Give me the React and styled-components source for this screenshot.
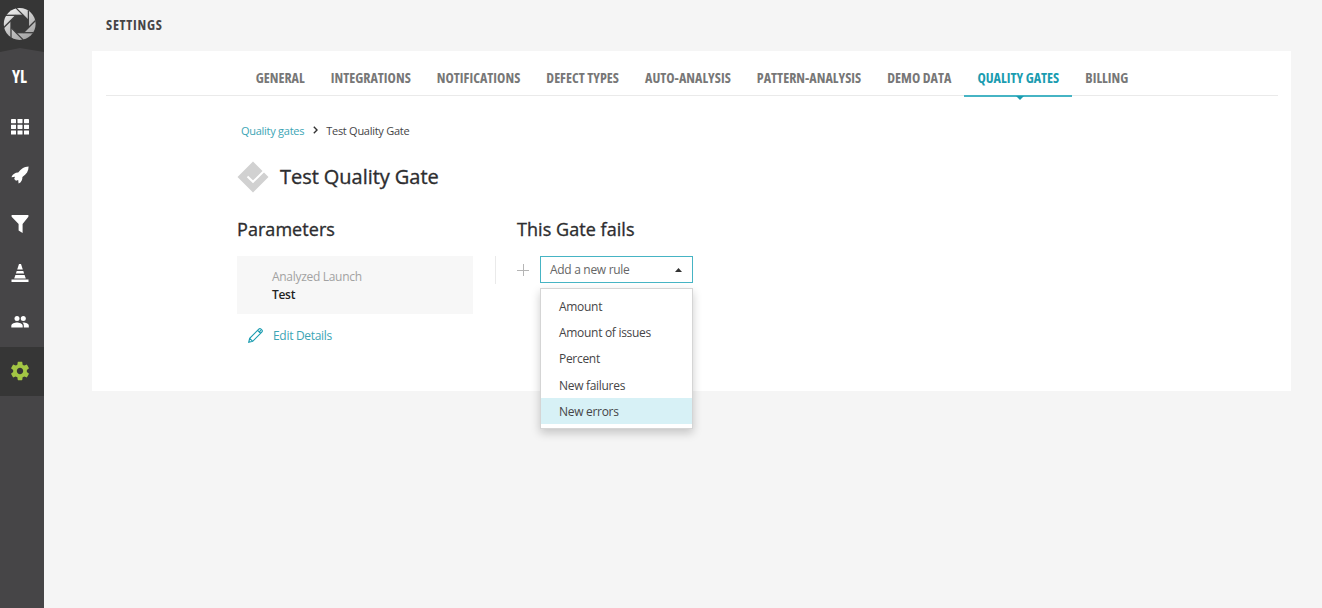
import React from 'react';
import styled, { createGlobalStyle, css } from 'styled-components';

const GlobalStyle = createGlobalStyle`
  * { box-sizing: border-box; }
  body {
    margin: 0;
    background: #f5f5f5;
    font-family: 'Open Sans', 'Noto Sans', sans-serif;
    letter-spacing: -0.3px;
    color: #464547;
    overflow: hidden;
  }
`;

const condensed = css`
  font-family: 'Open Sans', 'Noto Sans', sans-serif;
  font-stretch: 75%;
  font-weight: 700;
  letter-spacing: 0;
`;

const mediumWeight = css`
  font-weight: 500;
  letter-spacing: 0;
  color: #2d2d2f;
  -webkit-text-stroke: 0.35px #2d2d2f;
`;

const Layout = styled.div`
  display: flex;
  width: 1322px;
  height: 608px;
`;

const Sidebar = styled.nav`
  display: flex;
  flex-direction: column;
  width: 44px;
  height: 608px;
  background: #464547;
`;

const LogoBox = styled.div`
  height: 53px;
  svg { display: block; }
`;

const ProjectName = styled.div`
  ${condensed}
  height: 49px;
  padding-right: 5px;
  line-height: 48px;
  font-size: 17px;
  text-align: center;
  color: #fff;
`;

const NavItem = styled.div`
  display: flex;
  align-items: center;
  justify-content: center;
  height: 49px;
  padding: 0 4px ${(p) => (p.$low ? 0 : 2)}px 0;
  color: ${(p) => (p.$active ? '#a3c644' : '#fff')};
  background: ${(p) => (p.$active ? '#363636' : 'transparent')};
`;

const Main = styled.main`
  display: flex;
  flex-direction: column;
  flex: 1;
  padding: 0 31px 0 48px;
`;

const PageTitle = styled.h1`
  ${condensed}
  margin: 0;
  padding-left: 14px;
  height: 51px;
  line-height: 49px;
  font-size: 14px;
  letter-spacing: 0.75px;
`;

const Card = styled.section`
  height: 340px;
  padding: 0 13px 0 14px;
  background: #fff;
`;

const Tabs = styled.div`
  display: flex;
  justify-content: center;
  height: 45px;
  border-bottom: 1px solid #eaeaea;
`;

const Tab = styled.div`
  ${condensed}
  position: relative;
  height: 46px;
  padding: 0 13px;
  line-height: 53px;
  font-size: 14px;
  letter-spacing: 0.02px;
  white-space: nowrap;
  color: ${(p) => (p.$active ? '#1a9cb0' : '#777')};
  ${(p) => p.$active && css`
    border-bottom: 2px solid #46b4c4;
    &::after {
      content: '';
      position: absolute;
      left: 50%;
      bottom: -5px;
      margin-left: -2px;
      border: 4px solid transparent;
      border-bottom-width: 0;
      border-top-color: #1a9cb0;
    }
  `}
`;

const Content = styled.div`
  padding-left: 131px;
`;

const Breadcrumbs = styled.div`
  display: flex;
  align-items: center;
  height: 20px;
  margin-top: 24px;
  padding-left: 4px;
  font-size: 11px;
  letter-spacing: -0.27px;
  svg { margin: 0 8px 0 9px; }
`;

const Link = styled.span`
  color: #3ca5b5;
`;

const GateHeader = styled.div`
  display: flex;
  align-items: center;
  height: 34px;
  margin-top: 20px;
`;

const GateName = styled.h2`
  ${mediumWeight}
  margin: 0 0 0 11px;
  font-size: 20px;
  letter-spacing: -0.05px;
  line-height: 36px;
`;

const Columns = styled.div`
  display: flex;
  margin-top: 22px;
`;

const Parameters = styled.div`
  width: 236px;
`;

const Rules = styled.div`
  margin-left: 22px;
`;

const Heading = styled.h3`
  ${mediumWeight}
  margin: 0;
  height: 40px;
  padding-left: ${(p) => p.$indent || 0}px;
  font-size: 18px;
  letter-spacing: 0.05px;
  line-height: 26px;
`;

const ParamBox = styled.div`
  height: 58px;
  padding: 12px 0 0 35px;
  background: #f7f7f7;
  font-size: 12px;
  line-height: 18px;
`;

const ParamLabel = styled.div`
  color: #a2a2a2;
`;

const ParamValue = styled.div`
  font-size: 12px;
  font-weight: 600;
  line-height: 17px;
  color: #222;
`;

const EditLink = styled.div`
  display: flex;
  align-items: center;
  gap: 10px;
  height: 20px;
  margin-top: 11px;
  padding-left: 11px;
  font-size: 12px;
  color: #3ca5b5;
`;

const RuleRow = styled.div`
  display: flex;
  height: 28px;
  border-left: 1px solid #eaeaea;
  padding-left: 21px;
`;

const PlusBox = styled.div`
  width: 23px;
  padding-top: 8px;
  svg { display: block; }
`;

const Select = styled.div`
  position: relative;
  display: flex;
  align-items: center;
  justify-content: space-between;
  width: 153px;
  height: 27px;
  padding: 0 10px 0 9px;
  border: 1px solid #46b4c4;
  font-size: 12px;
  color: #666;
`;

const Menu = styled.div`
  position: absolute;
  left: -1px;
  top: 31px;
  width: 153px;
  height: 141px;
  padding-top: 4px;
  border: 1px solid #d5d5d5;
  background: #fff;
  box-shadow: 0 4px 9px rgba(0, 0, 0, 0.2);
`;

const Option = styled.div`
  height: 26.2px;
  padding-left: 18px;
  line-height: 27.4px;
  color: #464547;
  background: ${(p) => (p.$hover ? '#d7f1f6' : 'transparent')};
`;

const Logo = () => (
  <svg width="44" height="53" viewBox="0 0 44 53">
    <path d="M0 0h44v52L20 48 0 52z" fill="#363636" />
    <defs>
      <linearGradient id="blade" x1="0" y1="0" x2="0.6" y2="1">
        <stop offset="0" stopColor="#f4f4f4" />
        <stop offset="1" stopColor="#a6a6a6" />
      </linearGradient>
    </defs>
    <circle cx="19.7" cy="24" r="15.900" fill="url(#blade)" />
    <path
      d="M16.100 15.300h7.200l5.100 5.100v7.200l-5.100 5.100h-7.200l-5.100-5.100v-7.200z"
      fill="#3a3a3a"
    />
    <g stroke="#3c3c3c" strokeWidth="1.300">
      {[0, 45, 90, 135, 180, 225, 270, 315].map((a) => (
        <path key={a} d="M23.300 15.300H6" transform={`rotate(${a} 19.7 24)`} />
      ))}
    </g>
  </svg>
);

const GridIcon = () => (
  <svg width="18" height="16" viewBox="0 0 18 16" fill="currentColor">
    {[0, 5.7, 11.4].map((y) =>
      [0, 6.5, 13].map((x) => <rect key={`${x}-${y}`} x={x} y={y} width="5" height="4.2" rx="0.4" />)
    )}
  </svg>
);

const RocketIcon = () => (
  <svg width="18" height="18" viewBox="0 0 18 18" fill="currentColor">
    <path d="M17.6.4C13.200.5 9.600 3 7.200 6.600 4.500 6.500 1.800 8 .4 11.300L4 10.800 3.200 13 5 14.800 7.200 14 7.600 17.600C10.500 16 11.500 13.800 11.400 10.900 15.500 8.200 17.700 4.800 17.600.4z" />
  </svg>
);

const FilterIcon = () => (
  <svg width="18" height="18" viewBox="0 0 18 18" fill="currentColor">
    <path d="M.6 0h16.800v1.800L11.600 9v9l-4-2.400V9L.6 1.800z" />
  </svg>
);

const ConeIcon = () => (
  <svg width="18" height="18" viewBox="0 0 18 18" fill="currentColor">
    <path d="M8 0h2l1.800 5.500H6.200zM5.700 7h6.600l.8 2.500H4.900zM4.400 11h9.200l1.200 3.500H3.200zM.5 15.500h17V18H.5z" />
  </svg>
);

const MembersIcon = () => (
  <svg width="18" height="18" viewBox="0 0 18 18" fill="currentColor">
    <circle cx="6" cy="5.500" r="2.500" />
    <circle cx="12.300" cy="5.500" r="2.500" />
    <path d="M.3 14.500v-1.800c0-2.200 3.700-3.200 5.700-3.200s5.700 1 5.700 3.200v1.800zM12.800 14.500v-2c0-1.200-.6-2.200-1.500-2.900 2.500-.3 6.500.7 6.500 3v1.900z" />
  </svg>
);

const GearIcon = () => (
  <svg width="22" height="22" viewBox="0 0 24 24" fill="currentColor">
    <path d="M19.430 12.980c.04-.32.070-.64.070-.98s-.03-.66-.07-.98l2.110-1.650c.19-.15.240-.42.120-.64l-2-3.460c-.12-.22-.39-.3-.61-.22l-2.490 1c-.52-.4-1.080-.73-1.690-.98l-.38-2.650C14.460 2.180 14.250 2 14 2h-4c-.25 0-.46.18-.49.420l-.38 2.650c-.61.25-1.170.59-1.690.98l-2.490-1c-.23-.09-.49 0-.61.220l-2 3.460c-.13.22-.07.49.12.640l2.110 1.650c-.04.32-.07.65-.07.980s.03.66.070.980l-2.110 1.650c-.19.15-.24.42-.12.640l2 3.460c.12.22.39.3.610.220l2.490-1c.52.4 1.080.73 1.690.980l.38 2.650c.03.24.24.420.49.420h4c.25 0 .46-.18.490-.420l.38-2.650c.61-.25 1.170-.59 1.690-.980l2.490 1c.23.09.49 0 .610-.220l2-3.460c.12-.22.070-.49-.12-.640l-2.110-1.650zM12 15.500c-1.930 0-3.500-1.570-3.500-3.500s1.570-3.500 3.500-3.500 3.500 1.570 3.500 3.500-1.570 3.500-3.500 3.500z" />
  </svg>
);

const GateIcon = () => (
  <svg width="32" height="32" viewBox="0 0 32 32">
    <path d="M16 .5L31.500 16 16 31.500.5 16z" fill="#d1d1d1" />
    <path d="M10.500 15.500l5.500 5.300L27.500 9.500" fill="none" stroke="#fff" strokeWidth="2" />
  </svg>
);

const PencilIcon = () => (
  <svg width="15" height="15" viewBox="0 0 16 16" fill="none" stroke="#1a9cb0" strokeWidth="1.200">
    <path d="M.8 15.200l1-4.200L11.500 1.300a1.700 1.700 0 0 1 2.400 0l.8.800a1.700 1.700 0 0 1 0 2.400L5 14.200zM10.300 2.600l3.100 3.100M1.800 11L5 14.200" />
    <path d="M12 4.200l1.800-1.800" />
  </svg>
);

const TABS = [
  'GENERAL', 'INTEGRATIONS', 'NOTIFICATIONS', 'DEFECT TYPES', 'AUTO-ANALYSIS',
  'PATTERN-ANALYSIS', 'DEMO DATA', 'QUALITY GATES', 'BILLING',
];
const OPTIONS = ['Amount', 'Amount of issues', 'Percent', 'New failures', 'New errors'];

export default function App() {
  return (
    <Layout>
      <GlobalStyle />
      <Sidebar>
        <LogoBox><Logo /></LogoBox>
        <ProjectName>YL</ProjectName>
        <NavItem $low><GridIcon /></NavItem>
        <NavItem><RocketIcon /></NavItem>
        <NavItem><FilterIcon /></NavItem>
        <NavItem><ConeIcon /></NavItem>
        <NavItem><MembersIcon /></NavItem>
        <NavItem $active><GearIcon /></NavItem>
      </Sidebar>
      <Main>
        <PageTitle>SETTINGS</PageTitle>
        <Card>
          <Tabs>
            {TABS.map((t) => <Tab key={t} $active={t === 'QUALITY GATES'}>{t}</Tab>)}
          </Tabs>
          <Content>
            <Breadcrumbs>
              <Link>Quality gates</Link>
              <svg width="5" height="8" viewBox="0 0 5 8" fill="none" stroke="#333" strokeWidth="1.400">
                <path d="M.8.8L4 4 .8 7.200" />
              </svg>
              <span>Test Quality Gate</span>
            </Breadcrumbs>
            <GateHeader>
              <GateIcon />
              <GateName>Test Quality Gate</GateName>
            </GateHeader>
            <Columns>
              <Parameters>
                <Heading>Parameters</Heading>
                <ParamBox>
                  <ParamLabel>Analyzed Launch</ParamLabel>
                  <ParamValue>Test</ParamValue>
                </ParamBox>
                <EditLink><PencilIcon />Edit Details</EditLink>
              </Parameters>
              <Rules>
                <Heading $indent={22}>This Gate fails</Heading>
                <RuleRow>
                  <PlusBox>
                    <svg width="12" height="12" viewBox="0 0 12 12" stroke="#b5b5b5">
                      <path d="M0 6.500h12M6.500 0v12" />
                    </svg>
                  </PlusBox>
                  <Select>
                    <span>Add a new rule</span>
                    <svg width="7" height="4" viewBox="0 0 7 4"><path d="M0 4L3.500 0 7 4z" fill="#333" /></svg>
                    <Menu>
                      {OPTIONS.map((o) => <Option key={o} $hover={o === 'New errors'}>{o}</Option>)}
                    </Menu>
                  </Select>
                </RuleRow>
              </Rules>
            </Columns>
          </Content>
        </Card>
      </Main>
    </Layout>
  );
}
